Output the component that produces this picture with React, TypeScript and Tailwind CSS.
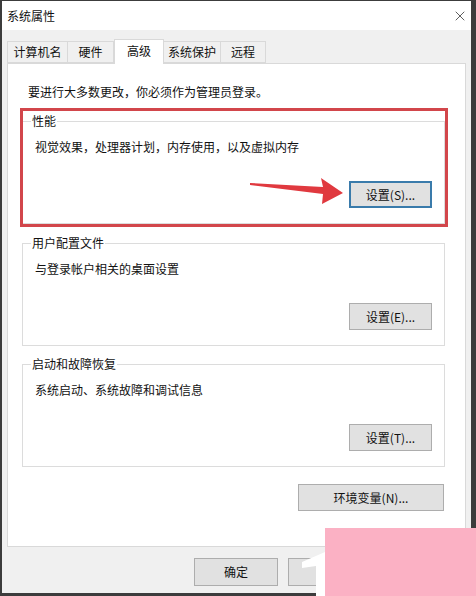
import { X } from 'lucide-react';

function Btn({ label, focused = false, className = '' }: { label: string; focused?: boolean; className?: string }) {
  return (
    <div
      className={`h-[27px] flex items-center justify-center text-[12px] leading-[16px] text-[#111] bg-[#e1e1e1] ${
        focused ? 'border-2 border-[#3a7bab]' : 'border border-[#adadad]'
      } ${className}`}
    >
      {label}
    </div>
  );
}

function Group({ title, desc, button, className = '' }: { title: string; desc: string; button: string; className?: string }) {
  return (
    <div className={`relative h-[103px] border border-[#dcdcdc] flex flex-col ${className}`}>
      <span className="absolute -top-[9px] left-[8px] bg-white px-[1px] text-[12px] leading-[16px] text-[#111]">
        {title}
      </span>
      <p className="pl-[12px] pt-[17px] text-[12px] leading-[16px] text-[#111]">{desc}</p>
      <div className="flex justify-end pr-[12px] mt-[26px]">
        <Btn label={button} focused={button === '设置(S)...'} className="w-[83px]" />
      </div>
    </div>
  );
}

const TABS = [
  { name: '计算机名', w: 'w-[61px]' },
  { name: '硬件', w: 'w-[47px]' },
  { name: '高级', w: 'w-[50px]', active: true },
  { name: '系统保护', w: 'w-[58px]' },
  { name: '远程', w: 'w-[46px]' },
];

export default function App() {
  return (
    <div className="relative w-[476px] h-[596px] overflow-hidden bg-[#3c3c3c] pl-[2px] pt-[1px] pr-[5px] pb-[3px] font-['Microsoft_YaHei','Noto_Sans_CJK_SC',sans-serif]">
      <div className="h-full flex flex-col bg-[#f0f0f0]">
        {/* title bar */}
        <div className="h-[29px] bg-white flex items-center justify-between pl-[5px] pr-[3px]">
          <span className="text-[12px] leading-[16px] text-[#111]">系统属性</span>
          <X className="w-[16px] h-[16px] text-[#222]" strokeWidth={1.1} />
        </div>

        <div className="flex-1 flex flex-col px-[5px] pt-[9px]">
          {/* tabs */}
          <div className="relative z-10 flex items-end h-[24px]">
            {TABS.map((t) =>
              t.active ? (
                <div
                  key={t.name}
                  className={`${t.w} h-[25px] -mb-px bg-white border border-b-0 border-[#d9d9d9] flex items-start justify-center pt-[3px] text-[12px] leading-[16px] text-[#111]`}
                >
                  {t.name}
                </div>
              ) : (
                <div
                  key={t.name}
                  className={`${t.w} h-[22px] bg-[#f0f0f0] border border-[#d9d9d9] -ml-px first:ml-0 flex items-center justify-center text-[12px] leading-[16px] text-[#111]`}
                >
                  {t.name}
                </div>
              )
            )}
          </div>

          {/* tab panel */}
          <div className="h-[484px] bg-white border border-[#d9d9d9] flex flex-col pl-[14px] pr-[20px] pt-[20px]">
            <p className="ml-[6px] text-[12px] leading-[16px] text-[#111]">要进行大多数更改，你必须作为管理员登录。</p>
            <Group className="mt-[21px]" title="性能" desc="视觉效果，处理器计划，内存使用，以及虚拟内存" button="设置(S)..." />
            <Group className="mt-[19px]" title="用户配置文件" desc="与登录帐户相关的桌面设置" button="设置(E)..." />
            <Group className="mt-[18px]" title="启动和故障恢复" desc="系统启动、系统故障和调试信息" button="设置(T)..." />
            <div className="flex justify-end mt-[17px] pr-[1px]">
              <Btn label="环境变量(N)..." className="w-[146px]" />
            </div>
          </div>

          {/* dialog buttons */}
          <div className="flex gap-[10px] pl-[187px] pt-[11px]">
            <Btn label="确定" className="w-[85px] h-[28px]" />
            <Btn label="取消" className="w-[85px] h-[28px]" />
            <Btn label="应用(A)" className="w-[85px] h-[28px]" />
          </div>
        </div>
      </div>

      {/* red annotation box */}
      <div className="absolute left-[20px] top-[108px] w-[428px] h-[119px] border-[3px] border-[#d2464b]" />

      {/* red arrow */}
      <svg className="absolute left-[245px] top-[172px]" width="105" height="36" viewBox="0 0 105 36">
        <polygon points="5,11 78,15 76,6 98,21 77,32 78,22 5,13" fill="#e0393f" />
      </svg>

      {/* watermark */}
      <div className="absolute left-[325px] top-[528px] w-[151px] h-[68px] bg-[#fbb1c4]" />
      <svg className="absolute left-[298px] top-[548px]" width="28" height="48" viewBox="0 0 28 48">
        <polygon points="4,14 27,4 27,48 18,48 18,18 4,20" fill="#ffffff" />
      </svg>
    </div>
  );
}
